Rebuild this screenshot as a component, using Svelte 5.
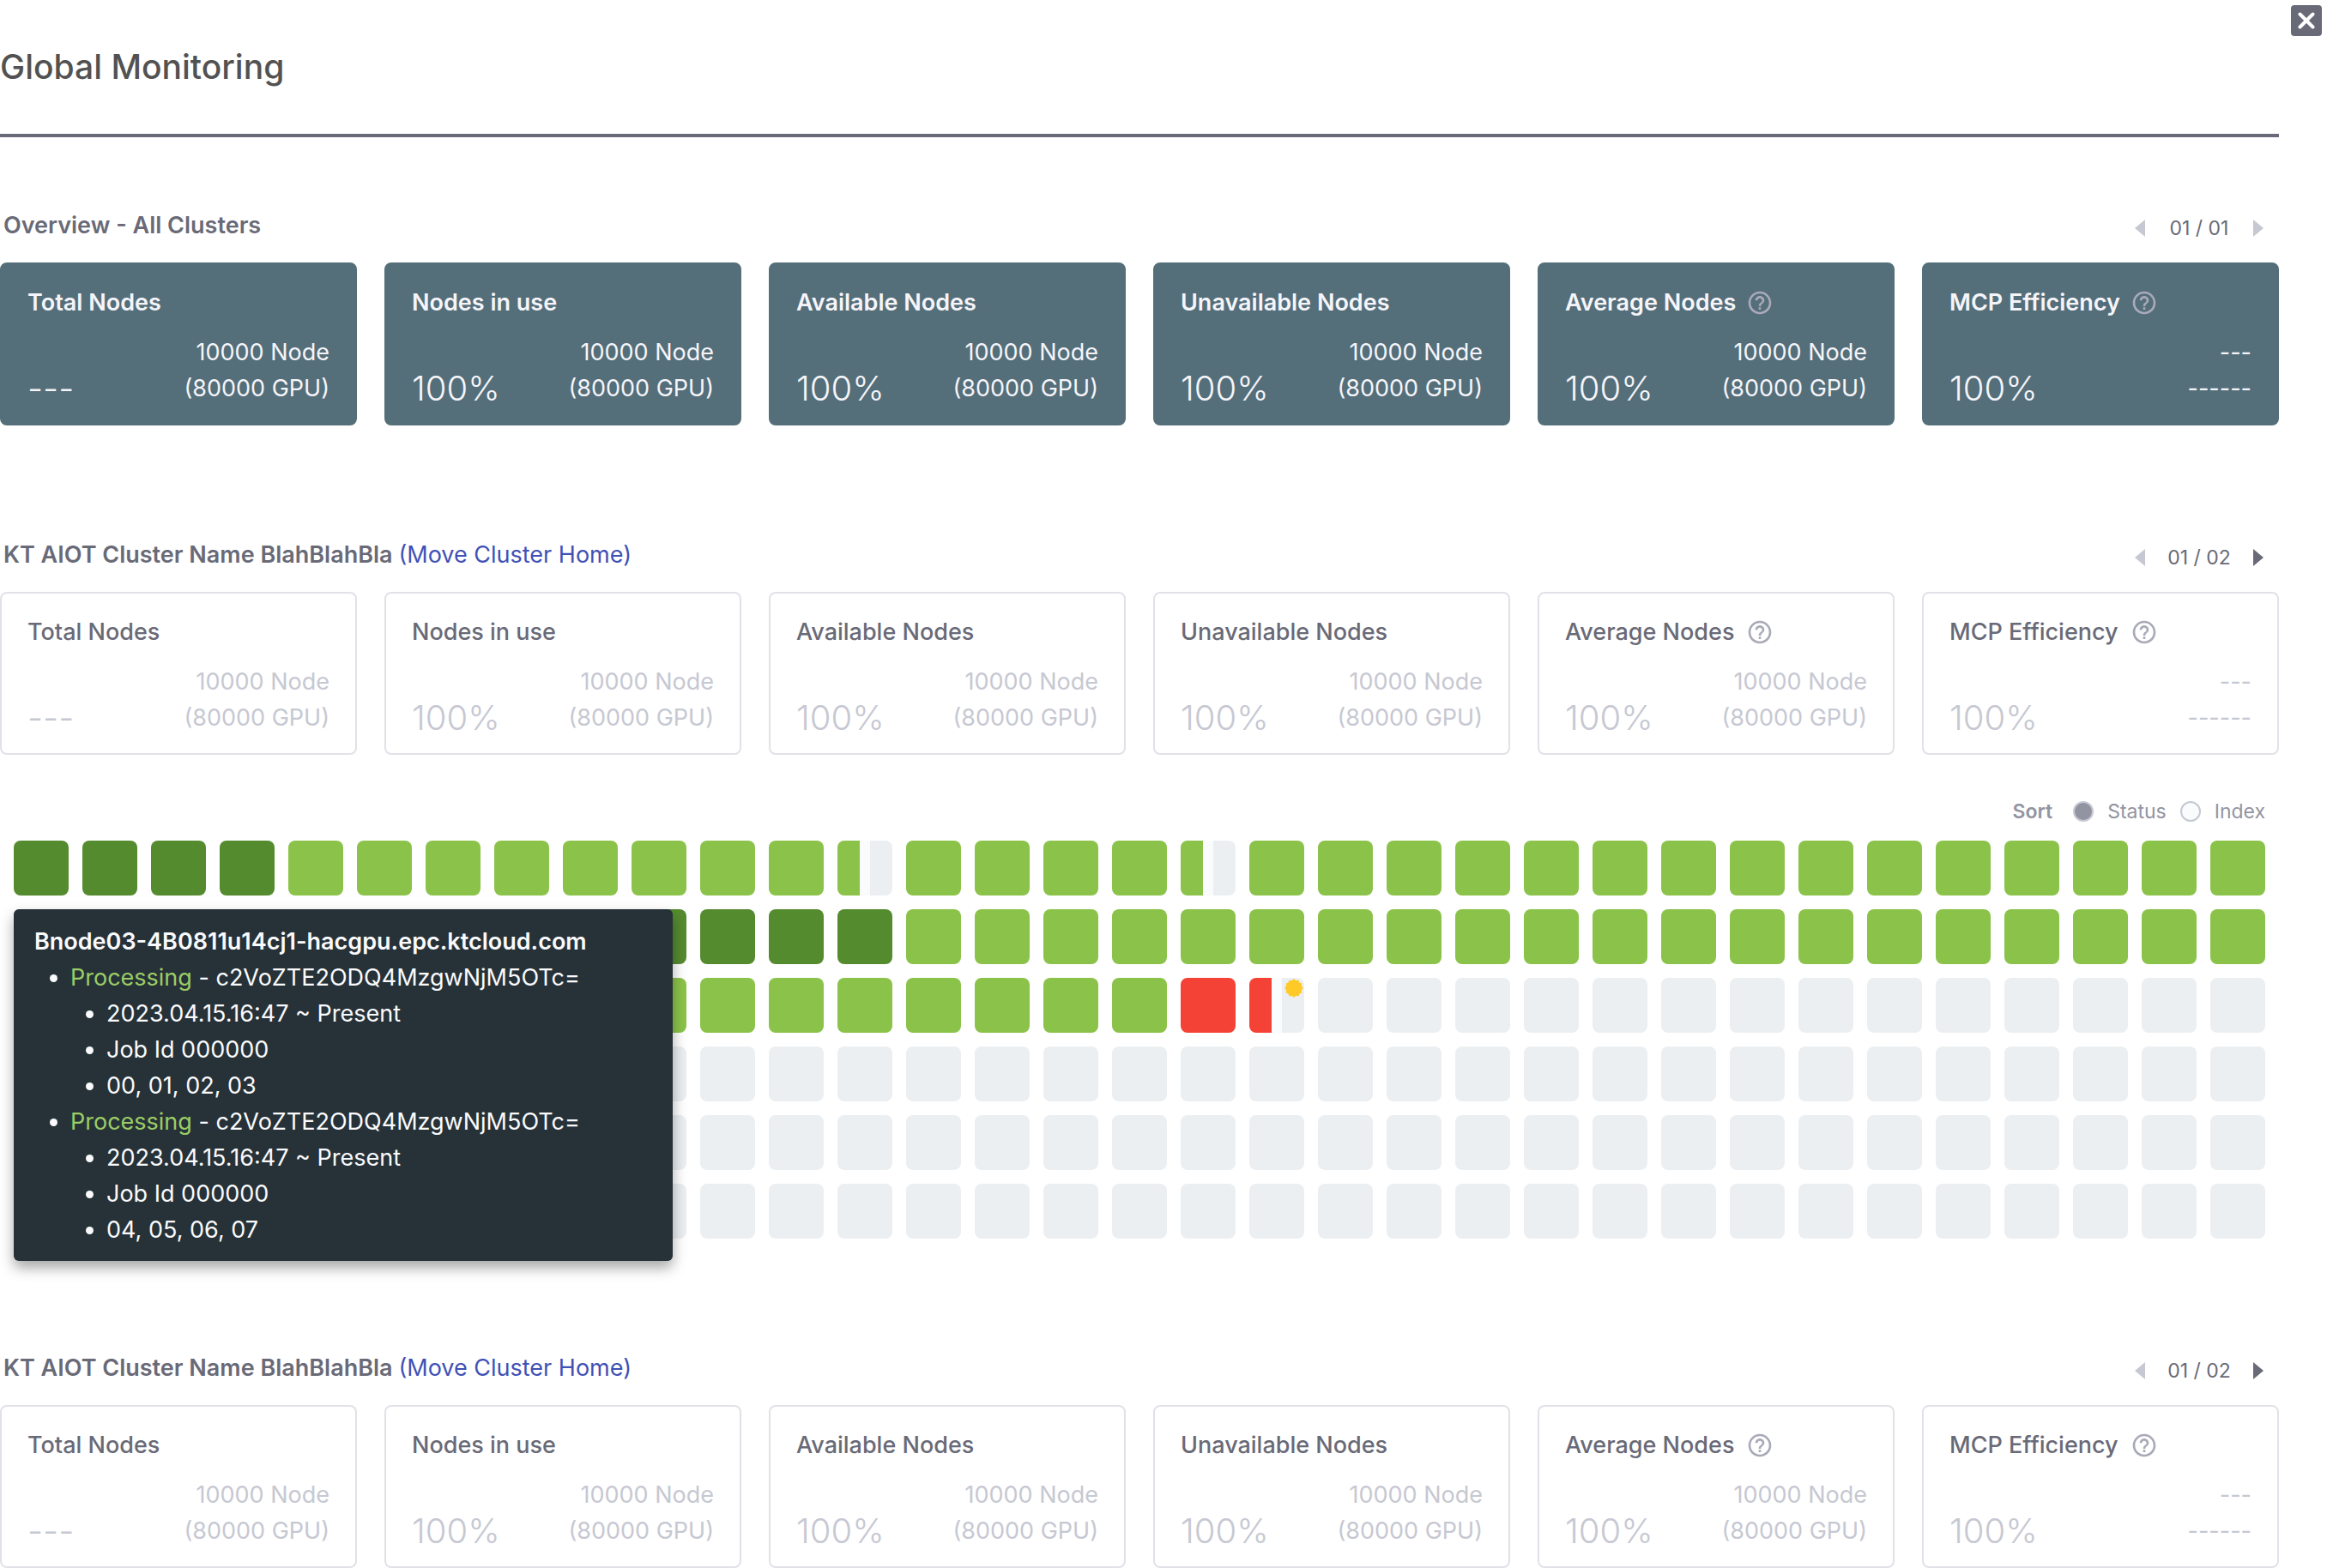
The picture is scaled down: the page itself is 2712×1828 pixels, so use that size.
<script>
  const metrics = [
    { title: 'Total Nodes', value: '---', top: '10000 Node', bottom: '(80000 GPU)' },
    { title: 'Nodes in use', value: '100%', top: '10000 Node', bottom: '(80000 GPU)' },
    { title: 'Available Nodes', value: '100%', top: '10000 Node', bottom: '(80000 GPU)' },
    { title: 'Unavailable Nodes', value: '100%', top: '10000 Node', bottom: '(80000 GPU)' },
    { title: 'Average Nodes', value: '100%', top: '10000 Node', bottom: '(80000 GPU)', help: true },
    { title: 'MCP Efficiency', value: '100%', top: '---', bottom: '------', help: true },
  ];

  const fill = (n, kind) => Array(n).fill(kind);
  const nodes = [
    ...fill(4, 'full'), ...fill(8, 'busy'), 'busy half', ...fill(4, 'busy'), 'busy half', ...fill(15, 'busy'),
    ...fill(13, 'full'), ...fill(20, 'busy'),
    ...fill(17, 'busy'), 'down', 'down half flagged', ...fill(14, 'idle'),
    ...fill(99, 'idle'),
  ];

  const jobs = [
    { id: 'c2VoZTE2ODQ4MzgwNjM5OTc=', lines: ['2023.04.15.16:47 ~ Present', 'Job Id 000000', '00, 01, 02, 03'] },
    { id: 'c2VoZTE2ODQ4MzgwNjM5OTc=', lines: ['2023.04.15.16:47 ~ Present', 'Job Id 000000', '04, 05, 06, 07'] },
  ];

  // Twelve-pointed badge outline on a 22-unit canvas
  const badge = Array.from({ length: 24 }, (_, i) => {
    const r = i % 2 ? 9.2 : 10.8;
    const a = (i * Math.PI) / 12;
    return `${(11 + r * Math.cos(a)).toFixed(2)},${(11 + r * Math.sin(a)).toFixed(2)}`;
  }).join(' ');

  let sort = $state('status');
</script>

{#snippet pager(total)}
  <nav class="pager" aria-label="Pages">
    <button disabled aria-label="Previous page"><svg width="12" height="20" viewBox="0 0 12 20"><path d="M12 0v20L0 10z" /></svg></button>
    <span>01 / {total}</span>
    <button disabled={total === '01'} aria-label="Next page"><svg width="12" height="20" viewBox="0 0 12 20"><path d="M0 0v20l12-10z" /></svg></button>
  </nav>
{/snippet}

{#snippet cards(solid)}
  <div class="cards" class:solid>
    {#each metrics as m}
      <article class="card">
        <h3>
          {m.title}
          {#if m.help}
            <button class="help" aria-label="About {m.title}">
              <svg width="32" height="32" viewBox="0 0 24 24"><path d="M11 18h2v-2h-2v2zm1-16C6.48 2 2 6.48 2 12s4.480 10 10 10 10-4.480 10-10S17.520 2 12 2zm0 18c-4.410 0-8-3.590-8-8s3.590-8 8-8 8 3.590 8 8-3.590 8-8 8zm0-14c-2.210 0-4 1.790-4 4h2c0-1.100.9-2 2-2s2 .9 2 2c0 2-3 1.750-3 5h2c0-2.250 3-2.500 3-5 0-2.210-1.790-4-4-4z" /></svg>
            </button>
          {/if}
        </h3>
        <div class="figures">
          <strong>{m.value}</strong>
          <p>{m.top}<br />{m.bottom}</p>
        </div>
      </article>
    {/each}
  </div>
{/snippet}

{#snippet clusterHead()}
  <header class="head">
    <h2>KT AIOT Cluster Name BlahBlahBla <a href="#cluster">(Move Cluster Home)</a></h2>
    {@render pager('02')}
  </header>
{/snippet}

<div class="page">
  <button class="close" aria-label="Close">
    <svg width="20" height="20" viewBox="0 0 20 20"><path d="M2.500 2.500l15 15M17.500 2.500l-15 15" /></svg>
  </button>

  <main>
    <h1>Global Monitoring</h1>

    <section>
      <header class="head">
        <h2>Overview - All Clusters</h2>
        {@render pager('01')}
      </header>
      {@render cards(true)}
    </section>

    <section>
      {@render clusterHead()}
      {@render cards(false)}

      <div class="sort" role="radiogroup" aria-label="Sort">
        <b>Sort</b>
        <label><input type="radio" name="sort" value="status" bind:group={sort} />Status</label>
        <label><input type="radio" name="sort" value="index" bind:group={sort} />Index</label>
      </div>

      <div class="map">
        {#each nodes as kind}
          <div class="node {kind}">
            {#if kind.includes('flagged')}
              <svg class="flag" width="22" height="22" viewBox="0 0 22 22"><polygon points={badge} /></svg>
            {/if}
          </div>
        {/each}

        <div class="tooltip" role="tooltip">
          <h4>Bnode03-4B0811u14cj1-hacgpu.epc.ktcloud.com</h4>
          <ul>
            {#each jobs as job}
              <li>
                <em>Processing</em> - {job.id}
                <ul>
                  {#each job.lines as line}<li>{line}</li>{/each}
                </ul>
              </li>
            {/each}
          </ul>
        </div>
      </div>
    </section>

    <section>
      {@render clusterHead()}
      {@render cards(false)}
    </section>
  </main>
</div>

<style>
  :global(body) {
    background: #fff;
  }
  .page {
    position: relative;
    padding-right: 56px;
    font: 400 27px/42px Inter, 'Noto Sans', sans-serif;
    color: #696a77;
  }
  .page :is(h1, h2, h3, h4, p, ul) {
    margin: 0;
  }
  button {
    display: flex;
    align-items: center;
    justify-content: center;
    padding: 0;
    border: 0;
    background: none;
    color: inherit;
  }
  svg {
    display: block;
    fill: currentColor;
  }

  .close {
    position: absolute;
    top: 6px;
    right: 6px;
    width: 36px;
    height: 36px;
    border-radius: 4px;
    background: #696a77;
    color: #fff;
  }
  .close path {
    stroke: currentColor;
    stroke-width: 4;
    stroke-linecap: round;
  }

  h1 {
    padding: 48px 0;
    border-bottom: 4px solid #696a77;
    font-size: 39px;
    font-weight: 500;
    line-height: 60px;
    color: #525252;
  }

  section {
    padding-top: 130px;
  }
  h1 + section {
    padding-top: 82px;
  }

  .head {
    display: flex;
    align-items: flex-start;
    justify-content: space-between;
    padding: 0 18px 22px 4px;
  }
  h2 {
    font-size: 27px;
    font-weight: 600;
  }
  h2 a {
    font-weight: 400;
    color: #3f51b5;
    text-decoration: none;
  }
  .pager {
    display: flex;
    align-items: center;
    padding-top: 6px;
    font-size: 23px;
    line-height: 36px;
  }
  .pager span {
    width: 126px;
    text-align: center;
  }
  .pager button:disabled {
    color: #c6c8d2;
  }

  .cards {
    display: grid;
    grid-template-columns: repeat(6, 1fr);
    gap: 32px;
  }
  .card {
    padding: 25px 30px 20px;
    border: 2px solid #e1e1e8;
    border-radius: 8px;
  }
  .card h3 {
    display: flex;
    align-items: center;
    gap: 14px;
    margin-bottom: 17px;
    font-size: 27px;
    font-weight: 500;
    line-height: 40px;
  }
  .help {
    color: #a9aab8;
  }
  .figures {
    display: flex;
    align-items: flex-end;
    justify-content: space-between;
    color: #c6c8d2;
  }
  .figures strong {
    font-size: 40px;
    font-weight: 300;
  }
  .figures p {
    text-align: right;
  }
  .solid .card {
    border-color: #546e7a;
    background: #546e7a;
  }
  .solid h3 {
    gap: 12px;
    font-weight: 600;
    color: #f5f5f9;
  }
  .solid .figures {
    color: #f5f5f9;
  }

  .sort {
    display: flex;
    align-items: center;
    justify-content: flex-end;
    gap: 16px;
    padding: 48px 16px 16px;
    font-size: 23px;
    line-height: 36px;
    color: #9394a1;
  }
  .sort b {
    margin-right: 8px;
    font-weight: 600;
  }
  .sort label {
    display: flex;
    align-items: center;
    gap: 16px;
  }
  .sort input {
    appearance: none;
    width: 24px;
    height: 24px;
    margin: 0;
    border: 2px solid #c6c8d2;
    border-radius: 50%;
    background: #fafbfc;
  }
  .sort input:checked {
    background: #9394a1;
  }

  .map {
    position: relative;
    display: grid;
    grid-template-columns: repeat(33, 1fr);
    gap: 16px;
    padding: 0 16px;
  }
  .node {
    position: relative;
    aspect-ratio: 1;
    border-radius: 8px;
    background: #eceff1;
  }
  .full {
    background: #558b2f;
  }
  .busy {
    background: #8bc34a;
  }
  .down {
    background: #f44336;
  }
  .busy.half {
    background: linear-gradient(90deg, #8bc34a 26px, #fafbfc 26px 38px, #eceff1 38px);
  }
  .down.half {
    background: linear-gradient(90deg, #f44336 26px, #fafbfc 26px 38px, #eceff1 38px);
  }
  .flag {
    position: absolute;
    top: 1px;
    right: 1px;
    color: #ffca28;
  }

  .tooltip {
    position: absolute;
    top: 80px;
    left: 16px;
    box-sizing: border-box;
    width: 768px;
    padding: 17px 24px 15px;
    border-radius: 6px;
    background: #263238;
    box-shadow: 0 8px 16px rgb(0 0 0 / 35%);
    color: #fafafc;
  }
  .tooltip h4 {
    font-size: 27px;
    font-weight: 600;
  }
  .tooltip ul {
    padding-left: 42px;
    list-style: disc;
  }
  .tooltip em {
    font-style: normal;
    color: #9ccc65;
  }
</style>
